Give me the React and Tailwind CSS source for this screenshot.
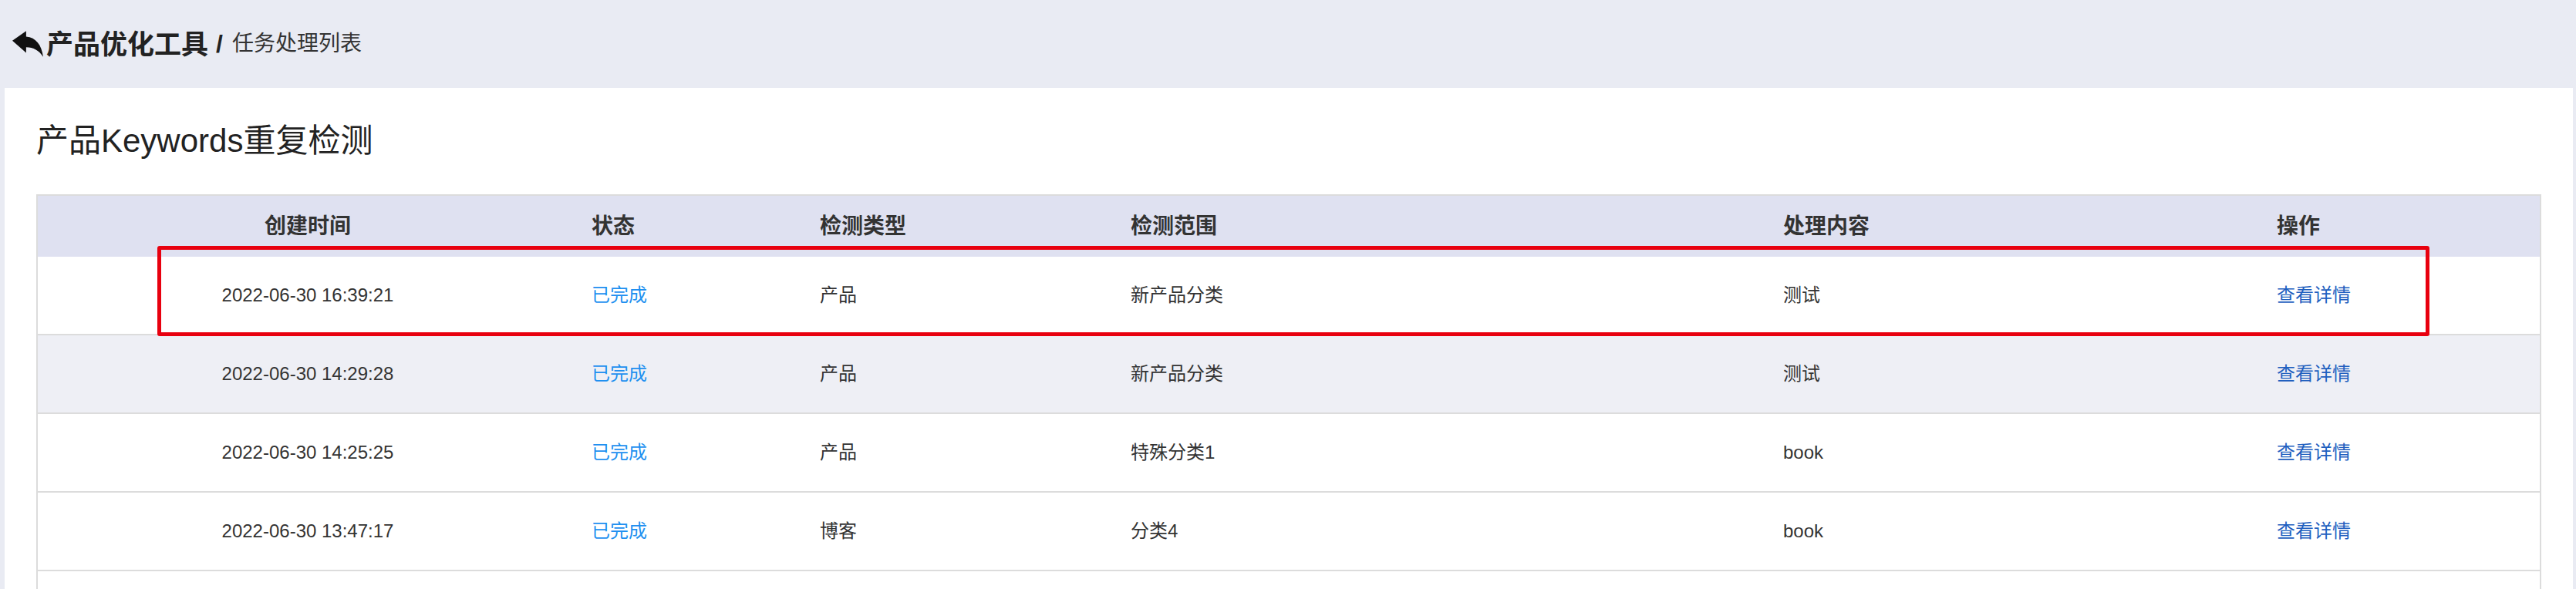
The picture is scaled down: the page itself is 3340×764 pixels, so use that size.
import React from "react";

const rows = [
  { time: "2022-06-30 16:39:21", status: "已完成", type: "产品", scope: "新产品分类", content: "测试" },
  { time: "2022-06-30 14:29:28", status: "已完成", type: "产品", scope: "新产品分类", content: "测试", hover: true },
  { time: "2022-06-30 14:25:25", status: "已完成", type: "产品", scope: "特殊分类1", content: "book" },
  { time: "2022-06-30 13:47:17", status: "已完成", type: "博客", scope: "分类4", content: "book" },
];

const cols = "grid grid-cols-[700px_296px_403px_846px_640px_1fr]";
const font = { fontFamily: '"Liberation Sans", "Noto Sans CJK SC", sans-serif' };

const BackArrow = () => (
  <svg viewBox="0 0 38 32" className="w-[40px] h-[34px] shrink-0">
    <path
      d="M0 12 L17 0 L17 7 C29 8 36 17 38 32 C33 24 26 20 17 20 L17 27 Z"
      fill="#111"
    />
  </svg>
);

const App = () => {
  return (
    <div className="h-screen overflow-hidden bg-[#e9ebf3]" style={font}>
      {/* breadcrumb */}
      <div className="h-[114px] flex items-center pl-[16px]">
        <BackArrow />
        <span className="ml-[4px] text-[35px] font-bold text-[#222] leading-none">产品优化工具</span>
        <span className="ml-[10px] text-[32px] font-bold text-[#222] leading-none">/</span>
        <span className="ml-[12px] text-[28px] text-[#333] leading-none">任务处理列表</span>
      </div>

      <div className="ml-[6px] mr-[4px] bg-white px-[41px] pt-[41px] pb-10 min-h-[650px]">
        <h1 className="text-[42px] leading-[56px] text-[#222] font-normal">产品Keywords重复检测</h1>

        <div className="relative mt-[41px] border-2 border-[#dcdcdc] border-b-0">
          <div className={`${cols} h-[79px] items-center bg-[#dfe1f1] text-[28px] font-bold text-[#333]`}>
            <div className="text-center">创建时间</div>
            <div className="pl-[18px]">状态</div>
            <div className="pl-[18px]">检测类型</div>
            <div className="pl-[18px]">检测范围</div>
            <div className="pl-[18px]">处理内容</div>
            <div className="pl-[18px]">操作</div>
          </div>

          {rows.map((r, i) => (
            <div
              key={i}
              className={`${cols} h-[102px] items-center border-b-2 border-[#dcdcdc] text-[24px] text-[#333] ${
                r.hover ? "bg-[#eeeff5]" : "bg-white"
              }`}
            >
              <div className="text-center">{r.time}</div>
              <div className="pl-[18px] text-[#1e90f0]">{r.status}</div>
              <div className="pl-[18px]">{r.type}</div>
              <div className="pl-[18px]">{r.scope}</div>
              <div className="pl-[18px]">{r.content}</div>
              <div className="pl-[18px] text-[#1f5fbf] cursor-pointer">查看详情</div>
            </div>
          ))}
          <div className="h-[102px] bg-white" />

          {/* highlight box */}
          <div className="absolute left-[155px] top-[65px] w-[2946px] h-[117px] border-[5px] border-[#e8000f] rounded-[3px] pointer-events-none" />
        </div>
      </div>
    </div>
  );
};

export default App;
